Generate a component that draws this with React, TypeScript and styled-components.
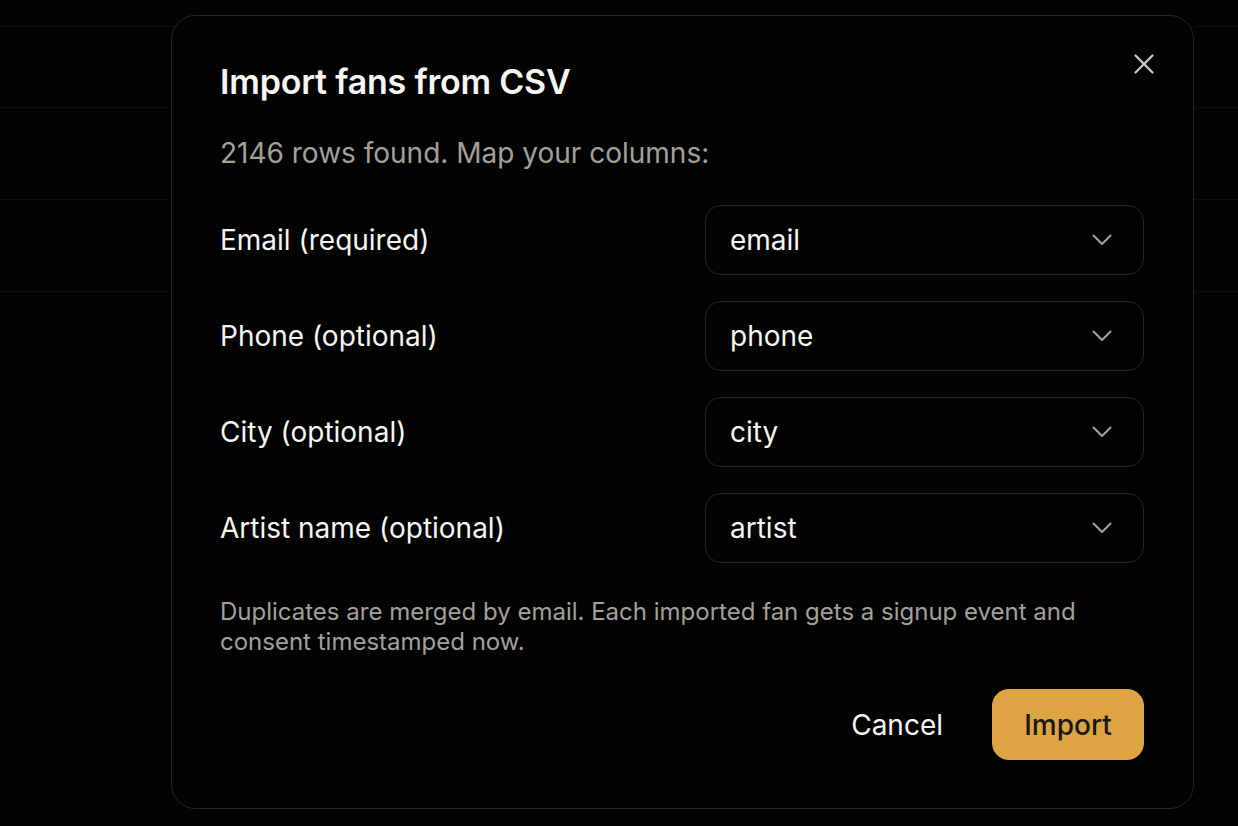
import styled, { createGlobalStyle } from "styled-components";

const GlobalStyle = createGlobalStyle`
  html, body {
    margin: 0;
    padding: 0;
    background: #030303;
  }
  body {
    font-family: Inter, "Noto Sans", sans-serif;
    color: #f5f3ef;
  }
`;

const mappings = [
  { label: "Email (required)", value: "email" },
  { label: "Phone (optional)", value: "phone" },
  { label: "City (optional)", value: "city" },
  { label: "Artist name (optional)", value: "artist" },
];

export default function App() {
  return (
    <>
      <GlobalStyle />
      <Page>
        <Band $h={26} />
        <Band $h={80} />
        <Band $h={91} />
        <Band $h={91} />
        <Overlay>
          <Modal>
            <CloseButton aria-label="Close">
              <svg width="24" height="24" viewBox="0 0 24 24" fill="none">
                <path d="M3.5 3.5L20.5 20.5M20.5 3.5L3.5 20.5" stroke="currentColor" strokeWidth="2.2" strokeLinecap="round" />
              </svg>
            </CloseButton>
            <Title>Import fans from CSV</Title>
            <Subtitle>2146 rows found. Map your columns:</Subtitle>
            <FieldList>
              {mappings.map((m) => (
                <FieldRow key={m.value}>
                  <FieldLabel>{m.label}</FieldLabel>
                  <Select>
                    <span>{m.value}</span>
                    <svg width="20" height="12" viewBox="0 0 20 12" fill="none">
                      <path d="M1.5 1.5l8.5 8.5 8.5-8.5" stroke="currentColor" strokeWidth="2" strokeLinecap="round" strokeLinejoin="round" />
                    </svg>
                  </Select>
                </FieldRow>
              ))}
            </FieldList>
            <Note>
              Duplicates are merged by email. Each imported fan gets a signup event and consent timestamped now.
            </Note>
            <Actions>
              <GhostButton>Cancel</GhostButton>
              <PrimaryButton>Import</PrimaryButton>
            </Actions>
          </Modal>
        </Overlay>
      </Page>
    </>
  );
}

const Page = styled.div`
  position: relative;
  width: 1238px;
  height: 826px;
  overflow: hidden;
  background: #030303;
`;

const Band = styled.div<{ $h: number }>`
  height: ${(p) => p.$h}px;
  border-bottom: 1px solid #0e0e0e;
`;

const Overlay = styled.div`
  position: absolute;
  inset: 0;
  display: flex;
  align-items: flex-start;
  padding: 15px 0 0 171px;
`;

const Modal = styled.div`
  position: relative;
  box-sizing: border-box;
  width: 1023px;
  height: 794px;
  background: #030303;
  border: 1.5px solid #262626;
  border-radius: 24px;
  padding: 46px 49px 0 48px;
  display: flex;
  flex-direction: column;
`;

const CloseButton = styled.button`
  position: absolute;
  top: 36px;
  right: 37px;
  background: none;
  border: none;
  padding: 0;
  color: #cfcdc9;
  display: flex;
  cursor: pointer;
`;

const Title = styled.h2`
  margin: 0;
  font-size: 34px;
  font-weight: 600;
  line-height: 40px;
  letter-spacing: -0.2px;
  color: #f7f5f1;
`;

const Subtitle = styled.p`
  margin: 34px 0 0;
  font-size: 28px;
  line-height: 34px;
  color: #a3a09b;
`;

const FieldList = styled.div`
  margin-top: 35px;
  display: flex;
  flex-direction: column;
  gap: 26px;
`;

const FieldRow = styled.div`
  display: grid;
  grid-template-columns: 1fr 439px;
  align-items: center;
`;

const FieldLabel = styled.span`
  font-size: 28px;
  color: #f7f5f1;
`;

const Select = styled.div`
  box-sizing: border-box;
  height: 70px;
  border: 1.5px solid #262626;
  border-radius: 16px;
  padding: 0 31px 0 24px;
  display: flex;
  align-items: center;
  justify-content: space-between;
  font-size: 28px;
  color: #f7f5f1;
  svg {
    color: #a3a09b;
  }
`;

const Note = styled.p`
  margin: 34px 0 0;
  font-size: 24px;
  line-height: 30px;
  color: #a3a09b;
`;

const Actions = styled.div`
  margin-top: 32px;
  display: flex;
  justify-content: flex-end;
  align-items: center;
  gap: 24px;
`;

const GhostButton = styled.button`
  background: none;
  border: none;
  font-family: inherit;
  font-size: 28px;
  color: #f7f5f1;
  padding: 0 25px 0 24px;
  height: 71px;
  cursor: pointer;
`;

const PrimaryButton = styled.button`
  background: #dea443;
  border: none;
  border-radius: 17px;
  font-family: inherit;
  font-size: 28px;
  font-weight: 500;
  color: #1a1712;
  height: 71px;
  width: 152px;
  cursor: pointer;
`;
